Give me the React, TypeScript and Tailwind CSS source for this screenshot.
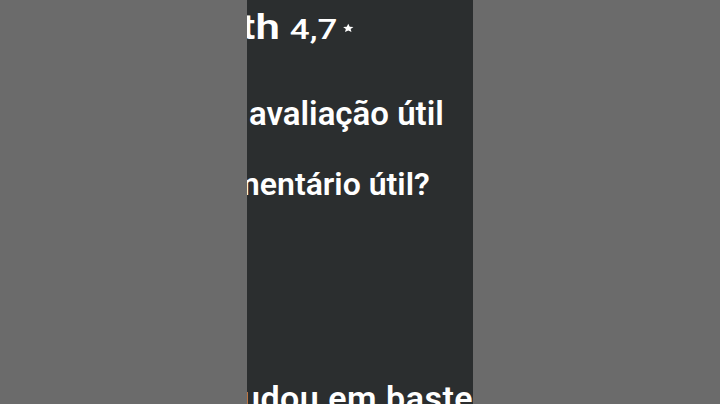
export default function App() {
  return (
    <div className="flex h-[404px] w-[720px] overflow-hidden bg-[#6b6b6b] font-['Roboto','Liberation_Sans',sans-serif] text-white">
      <div className="flex-1" />
      <div className="flex w-[226px] shrink-0 flex-col overflow-hidden bg-[#2b2e2f]">
        {/* título com nota (quadro esticado na horizontal) */}
        <div className="flex origin-left scale-x-[1.25] items-baseline whitespace-nowrap pt-[10px]">
          <span className="ml-[-5px] text-[35px] leading-none font-semibold">th</span>
          <span className="ml-[8px] text-[28px] leading-none font-medium">4,7</span>
          <svg viewBox="0 0 24 24" className="ml-[4px] h-[10px] w-[10px] self-center fill-white">
            <path d="M12 2l2.9 6.9 7.1.6-5.4 4.7 1.6 7.3L12 17.8 5.8 21.5l1.6-7.3L2 9.5l7.1-.6z" />
          </svg>
        </div>

        <div className="mt-[52px] ml-[2px] whitespace-nowrap text-[33px] leading-none font-semibold">
          avaliação útil
        </div>

        <div className="mt-[38px] ml-[-15px] whitespace-nowrap text-[32px] leading-none font-semibold">
          mentário útil?
        </div>

        <div className="mt-[181px] ml-[-6px] whitespace-nowrap text-[34px] leading-none font-semibold tracking-[0.5px]">
          udou em baste
        </div>
      </div>
      <div className="flex-1" />
    </div>
  );
}
